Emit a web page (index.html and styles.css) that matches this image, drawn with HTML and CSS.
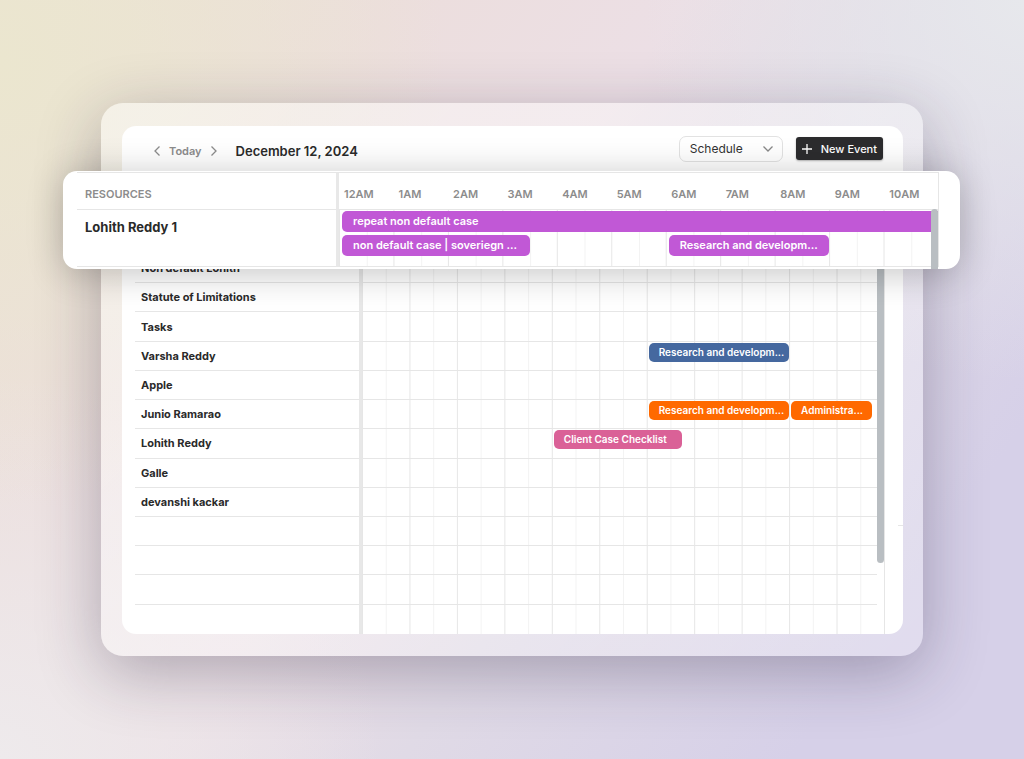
FILE: index.html
```html
<!DOCTYPE html>
<html lang="en">
<head>
  <meta charset="UTF-8">
  <meta name="viewport" content="width=device-width, initial-scale=1.0">
  <title>Schedule - December 12, 2024</title>
  <link rel="stylesheet" href="styles.css">
</head>
<body>
  <div class="frame">
    <main class="window">

      <!-- TOOLBAR -->
      <header class="toolbar">
        <div class="date-nav">
          <button type="button" class="icon-button" aria-label="Previous day">
            <svg width="8" height="12" viewBox="0 0 8 12"><path d="M6.500 1.500 2 6l4.500 4.500"/></svg>
          </button>
          <button type="button" class="today-button">Today</button>
          <button type="button" class="icon-button" aria-label="Next day">
            <svg width="8" height="12" viewBox="0 0 8 12"><path d="M1.500 1.500 6 6l-4.500 4.500"/></svg>
          </button>
        </div>
        <h1>December 12, 2024</h1>
        <div class="view-select">
          <select aria-label="View">
            <option>Schedule</option>
            <option>Day</option>
            <option>Week</option>
          </select>
          <svg width="12" height="8" viewBox="0 0 12 8"><path d="M1.500 1.500 6 6l4.500-4.500"/></svg>
        </div>
        <button type="button" class="new-event">
          <svg width="12" height="12" viewBox="0 0 12 12"><path d="M6 1v10M1 6h10"/></svg>
          New Event
        </button>
      </header>

      <!-- HIGHLIGHTED RESOURCE -->
      <section class="spotlight">
        <table class="schedule">
          <colgroup>
            <col class="resource-col">
            <col span="11">
          </colgroup>
          <thead>
            <tr>
              <th scope="col" class="resource">Resources</th>
              <th scope="col">12AM</th>
              <th scope="col">1AM</th>
              <th scope="col">2AM</th>
              <th scope="col">3AM</th>
              <th scope="col">4AM</th>
              <th scope="col">5AM</th>
              <th scope="col">6AM</th>
              <th scope="col">7AM</th>
              <th scope="col">8AM</th>
              <th scope="col">9AM</th>
              <th scope="col">10AM</th>
            </tr>
          </thead>
          <tbody>
            <tr>
              <th scope="row" class="resource">Lohith Reddy 1</th>
              <td colspan="11" class="track">
                <div class="events">
                  <a href="#" class="event purple all-day" style="--start: 1; --span: 44">repeat non default case</a>
                  <a href="#" class="event purple" style="--start: 1; --span: 14">non default case | soveriegn ...</a>
                  <a href="#" class="event purple" style="--start: 25; --span: 12">Research and developm...</a>
                </div>
              </td>
            </tr>
          </tbody>
        </table>
        <div class="scrollbar"></div>
      </section>

      <!-- ALL RESOURCES -->
      <section class="board">
        <table class="schedule">
          <colgroup>
            <col class="resource-col">
            <col>
          </colgroup>
          <tbody>
            <tr><th scope="row" class="resource">Non default Lohith</th><td class="track"></td></tr>
            <tr><th scope="row" class="resource">Statute of Limitations</th><td class="track"></td></tr>
            <tr><th scope="row" class="resource">Tasks</th><td class="track"></td></tr>
            <tr>
              <th scope="row" class="resource">Varsha Reddy</th>
              <td class="track">
                <div class="events">
                  <a href="#" class="event blue" style="--start: 25; --span: 12">Research and developm...</a>
                </div>
              </td>
            </tr>
            <tr><th scope="row" class="resource">Apple</th><td class="track"></td></tr>
            <tr>
              <th scope="row" class="resource">Junio Ramarao</th>
              <td class="track">
                <div class="events">
                  <a href="#" class="event orange" style="--start: 25; --span: 12">Research and developm...</a>
                  <a href="#" class="event orange" style="--start: 37; --span: 7">Administra...</a>
                </div>
              </td>
            </tr>
            <tr>
              <th scope="row" class="resource">Lohith Reddy</th>
              <td class="track">
                <div class="events">
                  <a href="#" class="event pink" style="--start: 17; --span: 11">Client Case Checklist</a>
                </div>
              </td>
            </tr>
            <tr><th scope="row" class="resource">Galle</th><td class="track"></td></tr>
            <tr><th scope="row" class="resource">devanshi kackar</th><td class="track"></td></tr>
            <tr><th class="resource"></th><td class="track"></td></tr>
            <tr><th class="resource"></th><td class="track"></td></tr>
            <tr><th class="resource"></th><td class="track"></td></tr>
            <tr><th class="resource"></th><td class="track"></td></tr>
          </tbody>
        </table>
        <div class="scrollbar"></div>
      </section>

    </main>
  </div>
</body>
</html>
```

FILE: styles.css
```css
:root {
  --text: #2a2a2a;
  --muted: #8c8c8c;
  --line: #e6e6e6;
  --line-soft: #f3f3f3;
  --divider: #e8e8e8;
  --scroll: #b9bec2;
}

*, *::before, *::after {
  box-sizing: border-box;
  margin: 0;
  padding: 0;
}

body {
  font-family: Inter, "Liberation Sans", sans-serif;
  color: var(--text);
  min-height: 100vh;
  padding: 103px 101px;
  background:
    radial-gradient(circle at 0% 8%, #ebe6cf 0%, rgba(235, 230, 207, 0) 36%),
    radial-gradient(circle at 100% 0%, #e7e8ec 0%, rgba(231, 232, 236, 0) 30%),
    radial-gradient(circle at 0% 100%, #eeeaec 0%, rgba(238, 234, 236, 0) 30%),
    linear-gradient(125deg, #ebe2d6 0%, #ecdedd 26%, #ecdfe5 44%, #e0dae6 60%, #d6d0e8 85%, #d6d0e8 100%);
}

button, select {
  font-family: inherit;
  border: none;
  background: none;
  cursor: pointer;
}

svg {
  display: block;
  fill: none;
  stroke: currentColor;
  stroke-width: 1.3;
}

/* FRAME */
.frame {
  padding: 23px 20px 22px 21px;
  border-radius: 22px;
  background: linear-gradient(135deg, rgba(255, 255, 255, 0.48), rgba(255, 255, 255, 0.26));
  box-shadow: 0 16px 64px rgba(40, 30, 60, 0.32);
}

.window {
  border-radius: 14px;
  background:
    linear-gradient(var(--line), var(--line)) 100% 399px / 5px 1px no-repeat,
    #fff;
}

/* TOOLBAR */
.toolbar {
  display: flex;
  align-items: center;
  height: 45px;
  padding: 0 20px 0 31px;
}

.date-nav {
  display: flex;
  align-items: center;
  gap: 8px;
  padding-top: 4px;
  color: var(--muted);
}

.date-nav button {
  color: inherit;
}

.today-button {
  font-size: 11px;
  font-weight: 600;
}

.toolbar h1 {
  margin-left: 18px;
  margin-right: auto;
  padding-top: 4px;
  font-size: 13px;
  font-weight: 600;
}

.view-select {
  position: relative;
  width: 104px;
  margin-right: 13px;
}

.view-select select {
  appearance: none;
  width: 100%;
  height: 26px;
  padding: 0 10px;
  border: 1px solid #e2e2e2;
  border-radius: 7px;
  background: #fff;
  color: #333;
  font-size: 12px;
}

.view-select svg {
  position: absolute;
  top: 9px;
  right: 9px;
  color: #888;
  pointer-events: none;
}

.new-event {
  display: flex;
  align-items: center;
  gap: 8px;
  height: 23px;
  padding: 0 6px 0 5px;
  border-radius: 3px;
  background: #2c2c2e;
  box-shadow: 0 1px 2px rgba(0, 0, 0, 0.3);
  color: #fff;
  font-size: 11px;
  font-weight: 500;
}

/* SCHEDULE TABLE */
.schedule {
  width: 100%;
  table-layout: fixed;
  border-collapse: separate;
  border-spacing: 0;
}

.schedule th {
  text-align: left;
}

.schedule .resource {
  border-right: 3px solid var(--divider);
  border-bottom: 1px solid var(--line);
}

/* hour lines, half-hour lines and the row line, which stops at the scrollbar */
.track {
  vertical-align: top;
  border-right: 1px solid var(--line);
  background:
    linear-gradient(var(--line), var(--line)) 0 100% / calc(100% - 7px) 1px no-repeat,
    linear-gradient(90deg, var(--line) 1px, transparent 1px, transparent 50%, var(--line-soft) 50%, var(--line-soft) calc(50% + 1px), transparent 0) 0 0 / calc(100% / 11) 100%;
}

/* one column per quarter of an hour */
.events {
  display: grid;
  grid-template-columns: repeat(44, 1fr);
}

.event {
  grid-column: var(--start) / span var(--span);
  overflow: hidden;
  border-radius: 5px;
  color: #fff;
  font-weight: 600;
  text-decoration: none;
  white-space: nowrap;
}

.purple { background: #c158d6; }
.blue { background: #45689f; }
.orange { background: #ff6900; }
.pink { background: #da6197; }

.scrollbar {
  position: absolute;
  width: 7px;
  background: var(--scroll);
}

/* HIGHLIGHTED RESOURCE */
.spotlight {
  position: relative;
  z-index: 1;
  margin: 0 -57px -15px -59px;
  padding: 1px 21px 2px 14px;
  overflow: hidden;
  border-radius: 14px;
  background: #fff;
  box-shadow: 0 4px 36px rgba(0, 0, 0, 0.24);
}

.spotlight .schedule {
  border-top: 1px solid var(--line);
}

.spotlight .resource-col {
  width: 262px;
}

.spotlight thead th {
  height: 37px;
  padding: 6px 0 0 5px;
  border-bottom: 1px solid var(--line);
  color: var(--muted);
  font-size: 11px;
  font-weight: 600;
}

.spotlight thead th:last-child {
  border-right: 1px solid var(--line);
}

.spotlight thead .resource {
  padding-left: 8px;
  text-transform: uppercase;
}

.spotlight tbody .resource {
  height: 57px;
  padding: 9px 8px;
  font-size: 13px;
  line-height: 16px;
  vertical-align: top;
}

.spotlight .events {
  row-gap: 3px;
  padding-top: 1px;
}

.spotlight .event {
  margin: 0 0 0 3px;
  padding-left: 11px;
  font-size: 11px;
  line-height: 21px;
}

.spotlight .all-day {
  border-radius: 5px 0 0 5px;
}

.spotlight .scrollbar {
  top: 38px;
  right: 22px;
  bottom: 0;
  border-radius: 4px 4px 0 0;
}

/* ALL RESOURCES */
.board {
  position: relative;
  padding: 0 18px 0 13px;
  overflow: hidden;
  border-radius: 0 0 14px 14px;
}

.board .schedule {
  height: 380px;
}

.board .resource-col {
  width: 227px;
}

.board .resource {
  height: 29px;
  padding-left: 6px;
  font-size: 11px;
}

.board tr:last-child .resource {
  border-bottom: none;
}

.board tr:last-child .track {
  background-size: 0 0, calc(100% / 11) 100%;
}

.board .event {
  margin: 1px 0 0 2px;
  padding-left: 10px;
  font-size: 10px;
  line-height: 19px;
}

.board .scrollbar {
  top: 0;
  right: 19px;
  height: 309px;
  border-radius: 0 0 4px 4px;
}
```
